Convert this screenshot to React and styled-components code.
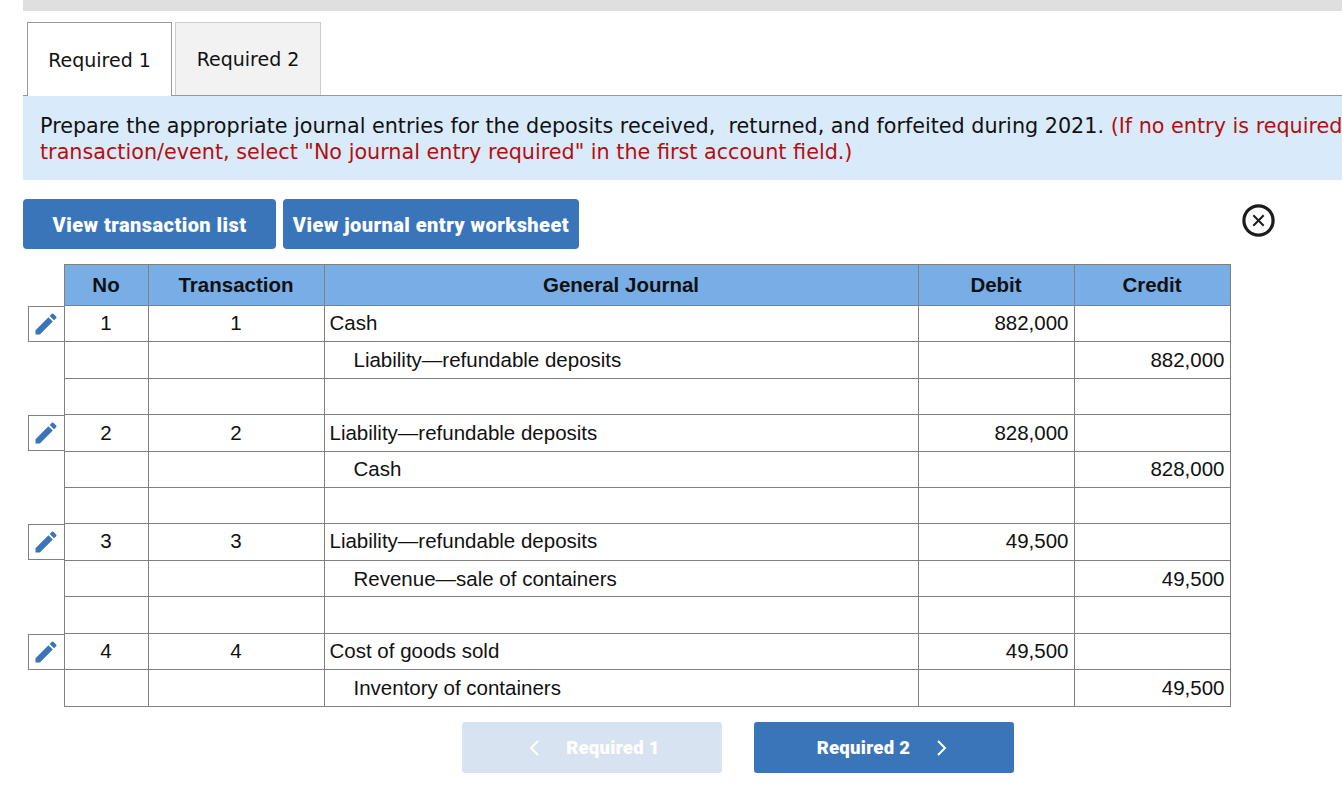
import { createGlobalStyle } from 'styled-components';
import styled from 'styled-components';

const GlobalStyle = createGlobalStyle`
  html, body {
    margin: 0;
    padding: 0;
    background: #fff;
    overflow: hidden;
  }
`;

const rows = [
  { h: 36, edit: true, lift: true, no: '1', tx: '1', account: 'Cash', debit: '882,000' },
  { h: 37, account: 'Liability—refundable deposits', indent: true, credit: '882,000' },
  { h: 36 },
  { h: 37, edit: true, no: '2', tx: '2', account: 'Liability—refundable deposits', debit: '828,000' },
  { h: 36, lift: true, account: 'Cash', indent: true, credit: '828,000' },
  { h: 36 },
  { h: 37, edit: true, lift: true, no: '3', tx: '3', account: 'Liability—refundable deposits', debit: '49,500' },
  { h: 36, account: 'Revenue—sale of containers', indent: true, credit: '49,500' },
  { h: 37 },
  { h: 36, edit: true, lift: true, no: '4', tx: '4', account: 'Cost of goods sold', debit: '49,500' },
  { h: 37, account: 'Inventory of containers', indent: true, credit: '49,500' },
];

function PencilIcon() {
  return (
    <svg width='28' height='28' viewBox='0 0 24 24' fill='#3a75b9'>
      <path d='M3 17.25V21h3.75L17.81 9.94l-3.75-3.75L3 17.25zM20.71 7.04a1 1 0 000-1.41l-2.34-2.34a1 1 0 00-1.41 0l-1.83 1.83 3.75 3.75 1.83-1.83z' />
    </svg>
  );
}

function CloseIcon() {
  return (
    <svg width='33' height='33' viewBox='0 0 33 33' fill='none' stroke='#1c1c1c'>
      <circle cx='16.5' cy='16.5' r='14.6' strokeWidth='3.2' />
      <path d='M11.3 11.3l10.4 10.4M21.7 11.3L11.3 21.7' strokeWidth='2' />
    </svg>
  );
}

function Chevron({ left }) {
  return (
    <svg width='12' height='18' viewBox='0 0 12 18' fill='none' stroke='#fff' strokeWidth='2'>
      <path d={left ? 'M10 2L3 9l7 7' : 'M2 2l7 7-7 7'} />
    </svg>
  );
}

export default function App() {
  return (
    <Page>
      <GlobalStyle />
      <TopBar />
      <Tabs>
        <Tab $active>Required 1</Tab>
        <Tab>Required 2</Tab>
      </Tabs>
      <Banner>
        Prepare the appropriate journal entries for the deposits received,&nbsp; returned, and forfeited during 2021.{' '}
        <Warning>
          (If no entry is required for a
          <br />
          transaction/event, select "No journal entry required" in the first account field.)
        </Warning>
      </Banner>
      <Toolbar>
        <ActionButton $width={253}>View transaction list</ActionButton>
        <ActionButton $width={296}>View journal entry worksheet</ActionButton>
        <CloseButton aria-label='Close'>
          <CloseIcon />
        </CloseButton>
      </Toolbar>
      <Journal>
        <colgroup>
          <col width='36' />
          <col width='84' />
          <col width='176' />
          <col width='594' />
          <col width='156' />
          <col width='156' />
        </colgroup>
        <thead>
          <tr>
            <Gutter />
            <Heading>No</Heading>
            <Heading>Transaction</Heading>
            <Heading>General Journal</Heading>
            <Heading>Debit</Heading>
            <Heading>Credit</Heading>
          </tr>
        </thead>
        <tbody>
          {rows.map((row, i) => (
            <Row key={i} $h={row.h}>
              <Gutter>
                {row.edit && (
                  <EditBox>
                    <PencilIcon />
                  </EditBox>
                )}
              </Gutter>
              <Cell $lift={row.lift} $align='center'>{row.no}</Cell>
              <Cell $lift={row.lift} $align='center'>{row.tx}</Cell>
              <Cell $lift={row.lift} $indent={row.indent}>{row.account}</Cell>
              <Cell $lift={row.lift} $align='right'>{row.debit}</Cell>
              <Cell $lift={row.lift} $align='right'>{row.credit}</Cell>
            </Row>
          ))}
        </tbody>
      </Journal>
      <Pager>
        <PagerButton $disabled>
          <Chevron left />
          <span>Required 1</span>
        </PagerButton>
        <PagerButton>
          <span>Required 2</span>
          <Chevron />
        </PagerButton>
      </Pager>
    </Page>
  );
}

const Page = styled.div`
  width: 1342px;
  height: 812px;
  padding-left: 23px;
  box-sizing: border-box;
  overflow: hidden;
`;

const TopBar = styled.div`
  height: 11px;
  background: #dfdfdf;
`;

const Tabs = styled.div`
  display: flex;
  gap: 3px;
  height: 74px;
  margin-top: 11px;
  padding-left: 4px;
  border-bottom: 1px solid #999;
  box-sizing: border-box;
`;

const Tab = styled.div`
  width: ${(p) => (p.$active ? '145px' : '146px')};
  height: ${(p) => (p.$active ? '74px' : '73px')};
  box-sizing: border-box;
  display: flex;
  align-items: center;
  justify-content: center;
  border: 1px solid ${(p) => (p.$active ? '#999' : '#ccc')};
  border-bottom: none;
  background: ${(p) => (p.$active ? '#fff' : '#f2f2f2')};
  color: #111;
  font: 19px 'DejaVu Sans', Verdana, sans-serif;
`;

const Banner = styled.div`
  height: 84px;
  padding: 17px 0 0 17px;
  box-sizing: border-box;
  background: #d9ebfa;
  color: #111;
  font: 20.72px/26px 'DejaVu Sans', Verdana, sans-serif;
  white-space: nowrap;
  overflow: hidden;
`;

const Warning = styled.span`
  color: #b30f0f;
`;

const Toolbar = styled.div`
  display: flex;
  align-items: center;
  gap: 7px;
  height: 50px;
  margin-top: 19px;
  width: 1252px;
`;

const ActionButton = styled.button`
  width: ${(p) => p.$width}px;
  height: 50px;
  padding: 2px 0 0;
  border: none;
  border-radius: 4px;
  background: #3a75b9;
  color: #fff;
  font: 900 20px Roboto, 'Liberation Sans', sans-serif;
  letter-spacing: 0.45px;
`;

const CloseButton = styled.button`
  display: flex;
  margin: 0 0 7px auto;
  padding: 0;
  border: none;
  background: none;
`;

const Journal = styled.table`
  width: 1202px;
  margin: 15px 0 0 5px;
  table-layout: fixed;
  border-collapse: collapse;
  font: 20.5px 'Liberation Sans', Arial, sans-serif;
  color: #111;
`;

const Heading = styled.th`
  height: 40px;
  padding: 0;
  border: 1px solid #808080;
  background: #79ade5;
  font-weight: 700;
  text-align: center;
`;

const Row = styled.tr`
  height: ${(p) => p.$h}px;
`;

const Cell = styled.td`
  padding: 0 5px ${(p) => (p.$lift ? '2px' : '0')} ${(p) => (p.$indent ? '29px' : '5px')};
  border: 1px solid #808080;
  text-align: ${(p) => p.$align || 'left'};
  white-space: nowrap;
`;

const Gutter = styled.td`
  padding: 0;
  border: none;
  vertical-align: top;
`;

const EditBox = styled.div`
  width: 37px;
  height: 36px;
  box-sizing: border-box;
  display: flex;
  align-items: center;
  justify-content: center;
  padding-right: 2px;
  border: 1px solid #808080;
`;

const Pager = styled.div`
  display: flex;
  gap: 32px;
  margin: 15px 0 0 439px;
`;

const PagerButton = styled.div`
  width: 260px;
  height: 51px;
  box-sizing: border-box;
  padding: ${(p) => (p.$disabled ? '0 0 0 4px' : '0 3px 0 0')};
  display: flex;
  align-items: center;
  justify-content: center;
  gap: 26px;
  border-radius: 3px;
  background: ${(p) => (p.$disabled ? '#d8e3f1' : '#3a75b9')};
  color: #fff;
  font: 900 18.5px Roboto, 'Liberation Sans', sans-serif;
  letter-spacing: 0.3px;
`;
